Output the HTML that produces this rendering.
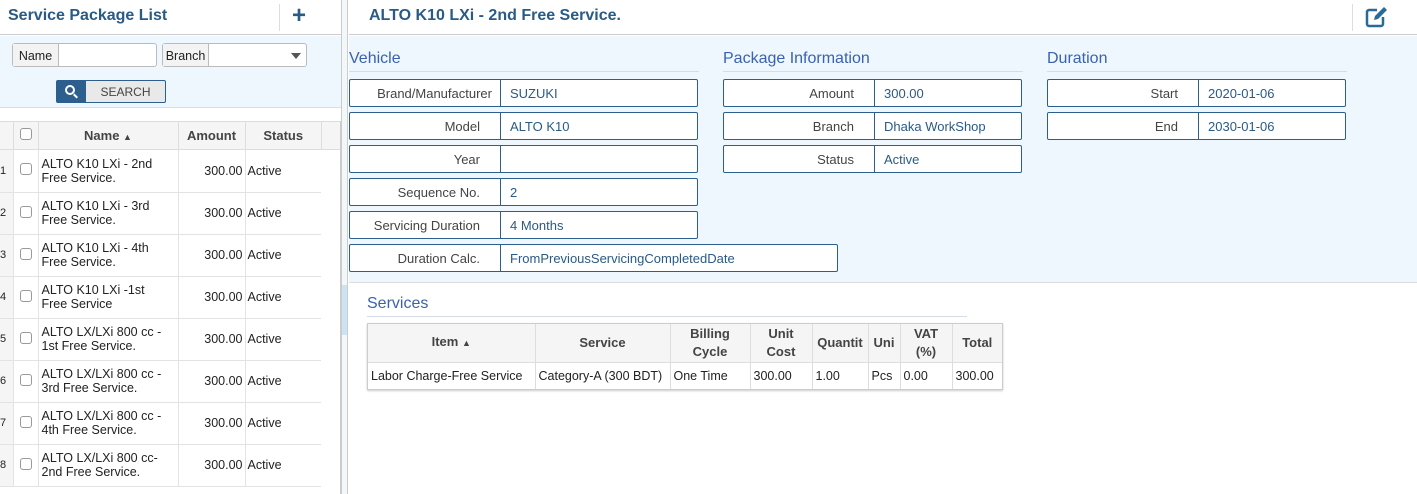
<!DOCTYPE html>
<html><head><style>
*{box-sizing:border-box;margin:0;padding:0}
body{width:1417px;height:494px;overflow:hidden;background:#fff;font-family:"Liberation Sans",sans-serif;font-size:13px;color:#222;position:relative}
.a{position:absolute}
.t{color:#2a5a86;font-weight:bold}
.fld{position:absolute;height:28px;border:1px solid #2d5f8e;border-radius:2px;background:#fff;display:flex}
.fld .l{width:151px;border-right:1px solid #2d5f8e;text-align:right;padding-right:20px;line-height:27px;color:#444;font-size:13px}
.fld .v{padding-left:9px;line-height:27px;color:#2a5a86;font-size:13px}
.sec{position:absolute;color:#3a62b0;font-size:16px;border-bottom:1px solid #d6dde6;height:22px}
table{border-collapse:collapse}
.lt td{border-bottom:1px solid #e3e3e3;border-right:1px solid #e3e3e3;height:42px;font-size:12.5px;vertical-align:middle}
.cb{width:12px;height:12px;border:1px solid #999;border-radius:3px;display:inline-block;background:#fff}
.st th{border-right:1px solid #ddd;font-weight:bold;color:#444;font-size:13px;background:#f5f5f5;height:38px;line-height:18px}
.st td{border-right:1px solid #ddd;font-size:12.5px;height:27px;padding-left:3px;border-top:1px solid #ddd}
</style></head><body>
<!-- left -->
<div class="a" style="left:0;top:0;width:341px;height:35px;border-bottom:1px solid #ccc"></div>
<div class="a t" style="left:8px;top:7px;font-size:16px">Service Package List</div>
<div class="a" style="left:279px;top:4px;width:1px;height:27px;background:#ddd"></div>
<div class="a" style="left:292px;top:6px;font-size:24px;font-weight:bold;color:#2a5a86;line-height:20px">+</div>
<div class="a" style="left:0;top:36px;width:341px;height:72px;background:#eef7fd;border-bottom:1px solid #ddd"></div>
<div class="a" style="left:12px;top:43px;width:145px;height:24px;border:1px solid #bbb;border-radius:3px;background:#fff;display:flex"><div style="width:46px;background:#f3f3f3;border-right:1px solid #bbb;line-height:24px;text-align:center;font-size:12.5px">Name</div></div>
<div class="a" style="left:162px;top:43px;width:145px;height:24px;border:1px solid #bbb;border-radius:3px;background:#fff;display:flex"><div style="width:46px;background:#f3f3f3;border-right:1px solid #bbb;line-height:24px;text-align:center;font-size:12.5px">Branch</div><div style="margin-left:82px;margin-top:9px;width:0;height:0;border-left:5px solid transparent;border-right:5px solid transparent;border-top:6px solid #555"></div></div>
<div class="a" style="left:56px;top:80px;width:110px;height:23px;border:1px solid #2d5f8e;border-radius:2px;display:flex;background:#e9e9e9"><div style="width:29px;background:#2d5f8e;position:relative"><div style="position:absolute;left:8px;top:4px;width:10px;height:10px;border:2px solid #fff;border-radius:50%"></div><div style="position:absolute;left:16px;top:14px;width:5px;height:2px;background:#fff;transform:rotate(45deg)"></div></div><div style="flex:1;text-align:center;line-height:23px;font-size:12px;color:#444">SEARCH</div></div>
<div class="a" style="left:0;top:121px;width:321px;height:29px;background:#f5f5f5;border-top:1px solid #ddd;border-bottom:1px solid #ddd"></div>
<div class="a" style="left:321px;top:121px;width:20px;height:29px;background:#f5f5f5;border-top:1px solid #ddd;border-bottom:1px solid #ddd;border-left:1px solid #ddd"></div>
<div class="a" style="left:0;top:121px">
<table style="width:321px;table-layout:fixed"><colgroup><col style="width:13px"><col style="width:25px"><col style="width:140px"><col style="width:67px"><col style="width:76px"></colgroup>
<tr style="height:28px;font-weight:bold;color:#444"><td style="border-right:1px solid #ddd"></td><td style="border-right:1px solid #ddd;text-align:center"><span class="cb"></span></td><td style="border-right:1px solid #ddd;text-align:center">Name <span style="font-size:9px">▲</span></td><td style="border-right:1px solid #ddd;text-align:center">Amount</td><td style="text-align:center">Status</td></tr>
</table>
<table class="lt" style="width:321px;table-layout:fixed;margin-top:1px"><colgroup><col style="width:13px"><col style="width:25px"><col style="width:140px"><col style="width:67px"><col style="width:76px"></colgroup>
<tr><td style="background:#f5f5f5;font-size:11px">1</td><td style="text-align:center"><span class="cb"></span></td><td style="padding-left:3px;padding-right:10px">ALTO K10 LXi - 2nd Free Service.</td><td style="text-align:right;padding-right:2px">300.00</td><td style="padding-left:2px;border-right:0">Active</td></tr>
<tr><td style="background:#f5f5f5;font-size:11px">2</td><td style="text-align:center"><span class="cb"></span></td><td style="padding-left:3px;padding-right:10px">ALTO K10 LXi - 3rd Free Service.</td><td style="text-align:right;padding-right:2px">300.00</td><td style="padding-left:2px;border-right:0">Active</td></tr>
<tr><td style="background:#f5f5f5;font-size:11px">3</td><td style="text-align:center"><span class="cb"></span></td><td style="padding-left:3px;padding-right:10px">ALTO K10 LXi - 4th Free Service.</td><td style="text-align:right;padding-right:2px">300.00</td><td style="padding-left:2px;border-right:0">Active</td></tr>
<tr><td style="background:#f5f5f5;font-size:11px">4</td><td style="text-align:center"><span class="cb"></span></td><td style="padding-left:3px;padding-right:10px">ALTO K10 LXi -1st<br>Free Service</td><td style="text-align:right;padding-right:2px">300.00</td><td style="padding-left:2px;border-right:0">Active</td></tr>
<tr><td style="background:#f5f5f5;font-size:11px">5</td><td style="text-align:center"><span class="cb"></span></td><td style="padding-left:3px;padding-right:10px">ALTO LX/LXi 800 cc - 1st Free Service.</td><td style="text-align:right;padding-right:2px">300.00</td><td style="padding-left:2px;border-right:0">Active</td></tr>
<tr><td style="background:#f5f5f5;font-size:11px">6</td><td style="text-align:center"><span class="cb"></span></td><td style="padding-left:3px;padding-right:10px">ALTO LX/LXi 800 cc - 3rd Free Service.</td><td style="text-align:right;padding-right:2px">300.00</td><td style="padding-left:2px;border-right:0">Active</td></tr>
<tr><td style="background:#f5f5f5;font-size:11px">7</td><td style="text-align:center"><span class="cb"></span></td><td style="padding-left:3px;padding-right:10px">ALTO LX/LXi 800 cc - 4th Free Service.</td><td style="text-align:right;padding-right:2px">300.00</td><td style="padding-left:2px;border-right:0">Active</td></tr>
<tr><td style="background:#f5f5f5;font-size:11px">8</td><td style="text-align:center"><span class="cb"></span></td><td style="padding-left:3px;padding-right:10px">ALTO LX/LXi 800 cc- 2nd Free Service.</td><td style="text-align:right;padding-right:2px">300.00</td><td style="padding-left:2px;border-right:0">Active</td></tr>
</table></div>
<div class="a" style="left:340px;top:121px;width:1px;height:373px;background:#ccc"></div>
<!-- divider -->
<div class="a" style="left:341px;top:0;width:7px;height:494px;background:#f2f8fa;border-left:1px solid #ccc;border-right:1px solid #ccc"></div>
<div class="a" style="left:342px;top:285px;width:5px;height:50px;background:#cbe3f3"></div>
<!-- right -->
<div class="a" style="left:349px;top:0;width:1068px;height:35px;border-bottom:1px solid #ccc"></div>
<div class="a t" style="left:369px;top:7px;font-size:16px">ALTO K10 LXi - 2nd Free Service.</div>
<div class="a" style="left:1352px;top:4px;width:1px;height:27px;background:#ddd"></div>
<svg class="a" style="left:1365px;top:6px" width="24" height="22" viewBox="0 0 24 22"><path d="M12 4H4a2 2 0 0 0-2 2v12a2 2 0 0 0 2 2h12a2 2 0 0 0 2-2v-7" fill="none" stroke="#2a6a96" stroke-width="2.5"/><path d="M19 1l3 3-9 9-4 1 1-4z" fill="#2a6a96"/></svg>
<div class="a" style="left:349px;top:36px;width:1068px;height:247px;background:#eef7fd;border-bottom:1px solid #ddd"></div>
<div class="sec" style="left:349px;top:50px;width:350px">Vehicle</div>
<div class="sec" style="left:723px;top:50px;width:300px">Package Information</div>
<div class="sec" style="left:1047px;top:50px;width:300px">Duration</div>
<div class="fld" style="left:349px;top:79px;width:349px"><div class="l" style="padding-right:8px">Brand/Manufacturer</div><div class="v">SUZUKI</div></div>
<div class="fld" style="left:349px;top:112px;width:349px"><div class="l">Model</div><div class="v">ALTO K10</div></div>
<div class="fld" style="left:349px;top:145px;width:349px"><div class="l">Year</div><div class="v"></div></div>
<div class="fld" style="left:349px;top:178px;width:349px"><div class="l">Sequence No.</div><div class="v">2</div></div>
<div class="fld" style="left:349px;top:211px;width:349px"><div class="l">Servicing Duration</div><div class="v">4 Months</div></div>
<div class="fld" style="left:349px;top:244px;width:489px"><div class="l">Duration Calc.</div><div class="v">FromPreviousServicingCompletedDate</div></div>
<div class="fld" style="left:723px;top:79px;width:299px"><div class="l">Amount</div><div class="v">300.00</div></div>
<div class="fld" style="left:723px;top:112px;width:299px"><div class="l">Branch</div><div class="v">Dhaka WorkShop</div></div>
<div class="fld" style="left:723px;top:145px;width:299px"><div class="l">Status</div><div class="v">Active</div></div>
<div class="fld" style="left:1047px;top:79px;width:299px"><div class="l">Start</div><div class="v">2020-01-06</div></div>
<div class="fld" style="left:1047px;top:112px;width:299px"><div class="l">End</div><div class="v">2030-01-06</div></div>
<div class="sec" style="left:367px;top:295px;width:600px">Services</div>
<div class="a" style="left:367px;top:323px;border:1px solid #ccc;box-shadow:0 1px 2px #ccc">
<table class="st" style="table-layout:fixed;width:634px"><colgroup><col style="width:167px"><col style="width:135px"><col style="width:80px"><col style="width:62px"><col style="width:56px"><col style="width:32px"><col style="width:52px"><col style="width:50px"></colgroup>
<tr><th>Item <span style="font-size:9px">▲</span></th><th>Service</th><th>Billing<br>Cycle</th><th>Unit<br>Cost</th><th>Quantit</th><th>Uni</th><th>VAT<br>(%)</th><th style="border-right:0">Total</th></tr>
<tr><td>Labor Charge-Free Service</td><td>Category-A (300 BDT)</td><td>One Time</td><td>300.00</td><td>1.00</td><td>Pcs</td><td>0.00</td><td style="border-right:0">300.00</td></tr>
</table></div>
</body></html>
